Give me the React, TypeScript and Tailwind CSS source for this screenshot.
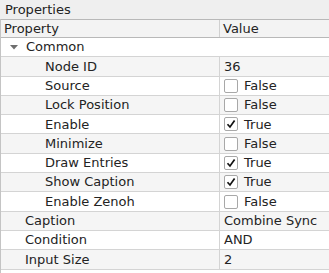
import React from 'react';

type Row = {
    label: string;
    indent: number;
    value?: string;
    check?: boolean;
    group?: boolean;
};

const rows: Row[] = [
    { label: 'Common', indent: 0, group: true },
    { label: 'Node ID', indent: 2, value: '36' },
    { label: 'Source', indent: 2, check: false },
    { label: 'Lock Position', indent: 2, check: false },
    { label: 'Enable', indent: 2, check: true },
    { label: 'Minimize', indent: 2, check: false },
    { label: 'Draw Entries', indent: 2, check: true },
    { label: 'Show Caption', indent: 2, check: true },
    { label: 'Enable Zenoh', indent: 2, check: false },
    { label: 'Caption', indent: 1, value: 'Combine Sync' },
    { label: 'Condition', indent: 1, value: 'AND' },
    { label: 'Input Size', indent: 1, value: '2' },
];

const CheckBox: React.FC<{ on: boolean }> = ({ on }) => (
    <span className="w-[14px] h-[14px] border border-[#a8a8a8] rounded-[2px] bg-white flex items-center justify-center">
        {on && (
            <svg width="10" height="10" viewBox="0 0 10 10">
                <path d="M1.5 5.2 L4 8 L8.6 1.5" fill="none" stroke="#111" strokeWidth="1.7" />
            </svg>
        )}
    </span>
);

export default function App() {
    return (
        <div className="w-[329px] h-[273px] flex flex-col bg-[#efefef] text-[13px] text-[#232323] overflow-hidden" style={{ fontFamily: '"DejaVu Sans", sans-serif' }}>
            <div className="h-[19px] shrink-0 pl-[5px] flex items-center">Properties</div>
            <div className="flex-1 border-l border-[#c4c4c4] bg-white">
                <div className="flex h-[19px] border-t border-b border-[#b8b8b8] bg-[#f3f3f3]">
                    <div className="w-[219px] pl-[3px] flex items-center border-r border-[#d0d0d0]">Property</div>
                    <div className="flex-1 pl-[3px] flex items-center">Value</div>
                </div>
                {rows.map((r, i) => (
                    <div key={r.label} className={`flex h-[19.3px] border-b border-[#d4d4d4] ${i % 2 === 1 ? 'bg-[#f5f5f5]' : 'bg-white'}`}>
                        {r.group ? (
                            <div className="w-[219px] flex items-center">
                                <span className="w-[25px] flex justify-center pl-[1px]">
                                    <svg width="8" height="5" viewBox="0 0 8 5"><path d="M0 0 L8 0 L4 4.5 Z" fill="#6e6e6e" /></svg>
                                </span>
                                <span>{r.label}</span>
                            </div>
                        ) : (
                            <div className={`w-[219px] flex items-center border-r border-[#d4d4d4] ${r.indent === 2 ? 'pl-[44px]' : 'pl-[24px]'}`}>
                                {r.label}
                            </div>
                        )}
                        <div className="flex-1 flex items-center pl-[4px]">
                            {r.value !== undefined && <span>{r.value}</span>}
                            {r.check !== undefined && (
                                <span className="flex items-center gap-[6px]">
                                    <CheckBox on={r.check} />
                                    <span>{r.check ? 'True' : 'False'}</span>
                                </span>
                            )}
                        </div>
                    </div>
                ))}
            </div>
        </div>
    );
}
